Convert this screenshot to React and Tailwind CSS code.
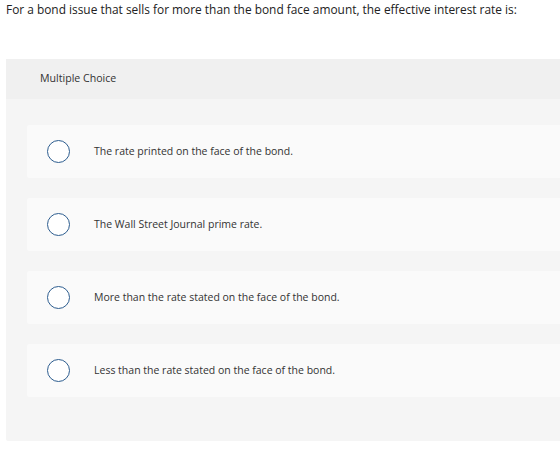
import React from 'react';

const choices = [
  'The rate printed on the face of the bond.',
  'The Wall Street Journal prime rate.',
  'More than the rate stated on the face of the bond.',
  'Less than the rate stated on the face of the bond.',
];

export default function App() {
  return (
    <div className="w-[560px] h-[462px] bg-white overflow-hidden font-['Open_Sans',Arial,sans-serif] text-[#333]">
      {/* Question */}
      <p className="pl-[6px] pt-[2px] h-[59px] text-[11.9px] leading-[15px] text-[#222]">
        For a bond issue that sells for more than the bond face amount, the effective interest rate is:
      </p>

      {/* Panel */}
      <div className="ml-[6px] w-[600px] rounded-[2px] bg-[#f5f5f5]">
        <div className="h-[40px] bg-[#f0f0f0] pl-[34px] flex items-center text-[10.6px] text-[#333]">
          Multiple Choice
        </div>
        <div className="pt-[26px] pb-[44px] pl-[21px] flex flex-col gap-[20px]">
          {choices.map((c) => (
            <div key={c} className="h-[53px] bg-[#fafafa] rounded-[2px] flex items-center">
              <span className="ml-[20px] w-[23px] h-[23px] rounded-full border-[1.5px] border-[#2d5d8f] bg-white shrink-0" />
              <span className="ml-[24px] text-[10.5px] text-[#333]">{c}</span>
            </div>
          ))}
        </div>
      </div>
    </div>
  );
}
